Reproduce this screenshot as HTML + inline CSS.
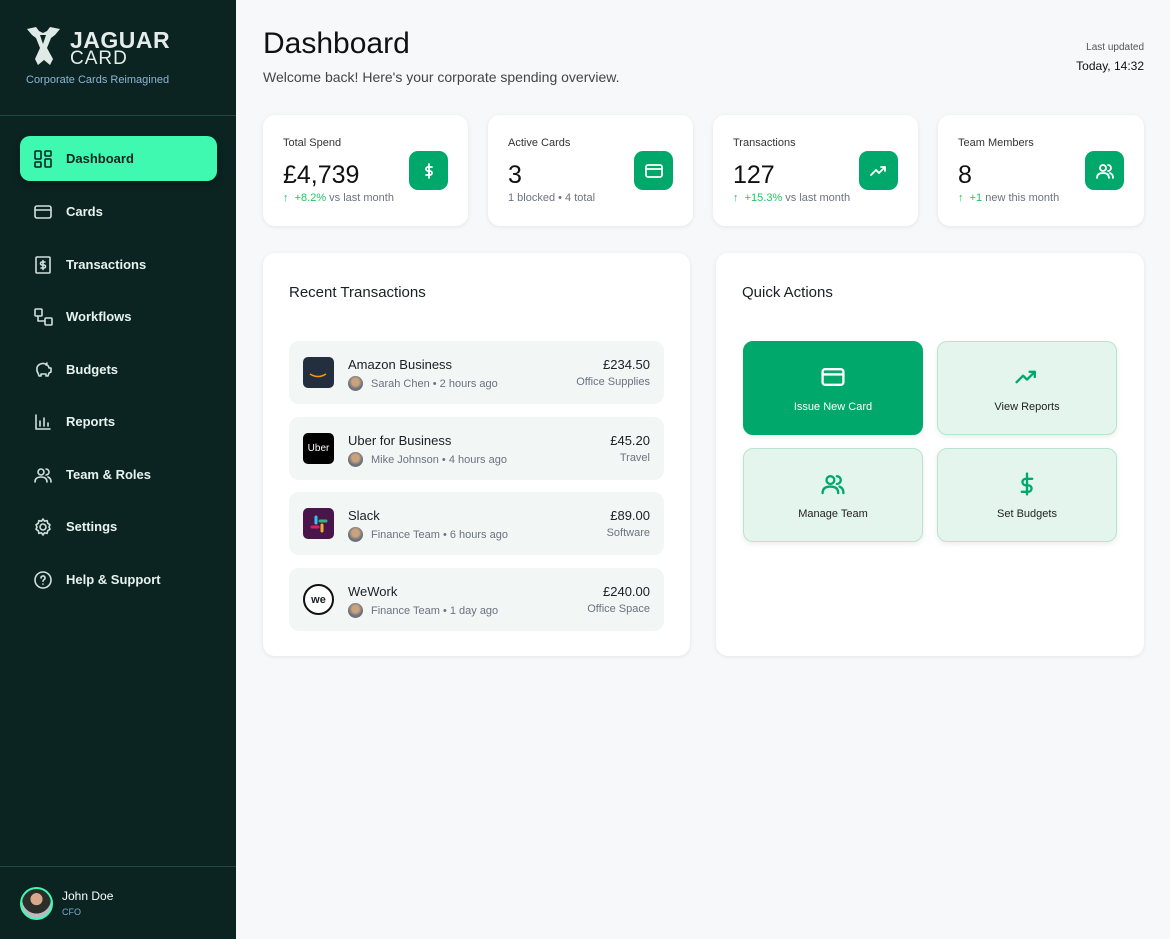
<!DOCTYPE html>
<html><head><meta charset="utf-8"><style>
*{box-sizing:border-box;margin:0;padding:0}
body{width:1170px;height:939px;font-family:"Liberation Sans",sans-serif;background:#f7f8f9;position:relative;overflow:hidden;color:#1a1f24}
.sb{position:absolute;left:0;top:0;width:236px;height:939px;background:#0b2421}
.logo{position:absolute;left:26px;top:26px}
.tag{position:absolute;left:26px;top:74px;font-size:11px;color:#8fb3d6}
.hr{position:absolute;left:0;width:236px;height:1px;background:#1d4a3f}
.nav{position:absolute;left:20px;width:197px;height:45px;display:flex;align-items:center;padding-left:13px;color:#e8f2ef;font-size:13px;font-weight:bold;border-radius:10px}
.nav svg{width:20px;height:20px;margin-right:13px;fill:none;stroke:#cfe0dc;stroke-width:1.6;stroke-linecap:round;stroke-linejoin:round}
.nav.act{background:#40f9b0;color:#0b2421;box-shadow:0 3px 8px rgba(0,0,0,.3)}
.nav.act svg{stroke:#0b2421}
.card{position:absolute;background:#fff;border-radius:12px;box-shadow:0 1px 4px rgba(0,0,0,.08)}
.st .l{position:absolute;left:20px;top:22px;font-size:11px;color:#333}
.st .v{position:absolute;left:20px;top:46px;font-size:25px;color:#111}
.st .s{position:absolute;left:20px;top:77px;font-size:11px;color:#6b7280}
.st .s b{color:#22c55e;font-weight:normal}
.st .ic{position:absolute;right:20px;top:36px;width:39px;height:39px;background:#00a86b;border-radius:9px;display:flex;align-items:center;justify-content:center}
.ic svg,.qa svg{fill:none;stroke:#fff;stroke-width:1.8;stroke-linecap:round;stroke-linejoin:round}
.tx{position:absolute;left:26px;width:375px;height:63px;background:#f2f6f5;border-radius:10px}
.tx .lg{position:absolute;left:14px;top:16px;width:31px;height:31px;border-radius:5px}
.tx .n{position:absolute;left:59px;top:16px;font-size:13px}
.tx .m{position:absolute;left:59px;top:35px;font-size:11px;color:#6b7280;display:flex;align-items:center}
.av{width:15px;height:15px;border-radius:50%;background:radial-gradient(circle at 50% 40%,#c9a37e 30%,#6b6f7a 60%);margin-right:8px}
.tx .a{position:absolute;right:14px;top:16px;font-size:13px}
.tx .c{position:absolute;right:14px;top:35px;font-size:11px;color:#6b7280}
.qa{position:absolute;width:180px;height:94px;border-radius:10px;background:#e4f5ee;border:1px solid #b7e6d0;box-shadow:0 2px 6px rgba(0,0,0,.08);font-size:11px;text-align:center;color:#222}
.qa svg{display:block;margin:22px auto 11px;stroke:#00a86b}
.qa.g{background:#00a86b;border-color:#00a86b;color:#fff}
.qa.g svg{stroke:#fff}
</style></head><body>
<div class="sb">
 <div class="logo">
  <svg width="36" height="40" viewBox="0 0 36 40"><path d="M1 3 L10 1 L13 5 L17 7 L21 5 L24 1 L34 3 L29 9 L25 12 L21 22 L27 33 L24 39 L18 34 L12 39 L9 33 L14 22 L10 12 L6 9 Z" fill="#dfe9e6"/><path d="M14 9 L17 18 L20 9 Z" fill="#0b2421"/></svg>
  <div style="position:absolute;left:44px;top:1px;font-size:23px;font-weight:bold;color:#e5ecea;letter-spacing:0.5px;line-height:26px">JAGUAR</div>
  <div style="position:absolute;left:44px;top:22px;font-size:19px;color:#e5ecea;letter-spacing:1px;line-height:22px">CARD</div>
 </div>
 <div class="tag">Corporate Cards Reimagined</div>
 <div class="hr" style="top:115px"></div>
 <div class="nav act" style="top:136px"><svg viewBox="0 0 20 20"><rect x="2" y="2" width="6" height="8" rx="1"/><rect x="12" y="2" width="6" height="5" rx="1"/><rect x="2" y="13" width="6" height="5" rx="1"/><rect x="12" y="10" width="6" height="8" rx="1"/></svg>Dashboard</div>
 <div class="nav" style="top:189px"><svg viewBox="0 0 20 20"><rect x="2" y="4" width="16" height="12" rx="2"/><path d="M2 8h16"/></svg>Cards</div>
 <div class="nav" style="top:242px"><svg viewBox="0 0 20 20"><rect x="3" y="2" width="14" height="16" rx="1"/><path d="M12 7h-3a1.5 1.5 0 0 0 0 3h2a1.5 1.5 0 0 1 0 3h-3M10 5.5v9"/></svg>Transactions</div>
 <div class="nav" style="top:294px"><svg viewBox="0 0 20 20"><rect x="2" y="2" width="7" height="7" rx="1"/><rect x="12" y="11" width="7" height="7" rx="1"/><path d="M5 9v5h7"/></svg>Workflows</div>
 <div class="nav" style="top:347px"><svg viewBox="0 0 20 20"><path d="M4 9a6 5 0 0 1 12-1h2v4l-2 1-1 3h-2v-2H8v2H6l-1-3a5 5 0 0 1-1-4zM13 5l1-2"/></svg>Budgets</div>
 <div class="nav" style="top:399px"><svg viewBox="0 0 20 20"><path d="M3 3v14h14M7 14V9M11 14V6M15 14v-3"/></svg>Reports</div>
 <div class="nav" style="top:452px"><svg viewBox="0 0 20 20"><circle cx="8" cy="7" r="3"/><path d="M2 17c0-4 3-5 6-5s6 1 6 5M13 4a3 3 0 0 1 0 6M15 12c2 1 3 2 3 5"/></svg>Team &amp; Roles</div>
 <div class="nav" style="top:504px"><svg viewBox="0 0 20 20"><circle cx="10" cy="10" r="3"/><path d="M10 2l1.5 2.2 2.6-.6.6 2.6L17 7.8 16 10l1 2.2-2.3 1.6-.6 2.6-2.6-.6L10 18l-1.5-2.2-2.6.6-.6-2.6L3 12.2 4 10 3 7.8l2.3-1.6.6-2.6 2.6.6z"/></svg>Settings</div>
 <div class="nav" style="top:557px"><svg viewBox="0 0 20 20"><circle cx="10" cy="10" r="8"/><path d="M8 8a2 2 0 1 1 3 1.7c-.7.4-1 .8-1 1.5M10 14v.1"/></svg>Help &amp; Support</div>
 <div class="hr" style="top:866px"></div>
 <div style="position:absolute;left:20px;top:887px;width:33px;height:33px;border-radius:50%;border:2px solid #40f9b0;background:radial-gradient(circle at 50% 35%,#d7a88a 25%,#2b2f2c 26%,#2b2f2c 60%,#b8bcc0 61%)"></div>
 <div style="position:absolute;left:62px;top:889px;font-size:12px;color:#fff">John Doe</div>
 <div style="position:absolute;left:62px;top:907px;font-size:9px;color:#7ea6d6">CFO</div>
</div>

<div style="position:absolute;left:263px;top:27px;font-size:30px;color:#111">Dashboard</div>
<div style="position:absolute;left:263px;top:69px;font-size:14px;color:#444">Welcome back! Here's your corporate spending overview.</div>
<div style="position:absolute;right:26px;top:42px;font-size:10px;color:#555;text-align:right">Last updated</div>
<div style="position:absolute;right:26px;top:59px;font-size:12px;color:#111">Today, 14:32</div>

<div class="card st" style="left:263px;top:115px;width:205px;height:111px"><div class="l">Total Spend</div><div class="v">£4,739</div><div class="s"><b>↑ &nbsp;+8.2%</b> vs last month</div><div class="ic"><svg width="20" height="20" viewBox="0 0 20 20"><path d="M13 6h-4a2 2 0 0 0 0 4h2a2 2 0 0 1 0 4H7M10 3v14"/></svg></div></div>
<div class="card st" style="left:488px;top:115px;width:205px;height:111px"><div class="l">Active Cards</div><div class="v">3</div><div class="s">1 blocked • 4 total</div><div class="ic"><svg width="20" height="20" viewBox="0 0 20 20"><rect x="2" y="4" width="16" height="12" rx="2"/><path d="M2 8h16"/></svg></div></div>
<div class="card st" style="left:713px;top:115px;width:205px;height:111px"><div class="l">Transactions</div><div class="v">127</div><div class="s"><b>↑ &nbsp;+15.3%</b> vs last month</div><div class="ic"><svg width="20" height="20" viewBox="0 0 20 20"><path d="M2 14l5-5 3 3 6-6M12 6h4v4"/></svg></div></div>
<div class="card st" style="left:938px;top:115px;width:206px;height:111px"><div class="l">Team Members</div><div class="v">8</div><div class="s"><b>↑ &nbsp;+1</b> new this month</div><div class="ic"><svg width="20" height="20" viewBox="0 0 20 20"><circle cx="8" cy="7" r="3"/><path d="M2 17c0-4 3-5 6-5s6 1 6 5M13 4a3 3 0 0 1 0 6M15 12c2 1 3 2 3 5"/></svg></div></div>

<div class="card" style="left:263px;top:253px;width:427px;height:403px">
 <div style="position:absolute;left:26px;top:31px;font-size:15px">Recent Transactions</div>
 <div class="tx" style="top:88px"><div class="lg" style="background:#232f3e"><svg width="31" height="31"><path d="M7 17q8 5 16 0" stroke="#f90" stroke-width="1.6" fill="none"/></svg></div><div class="n">Amazon Business</div><div class="m"><span class="av"></span>Sarah Chen • 2 hours ago</div><div class="a">£234.50</div><div class="c">Office Supplies</div></div>
 <div class="tx" style="top:164px"><div class="lg" style="background:#000;color:#fff;font-size:10px;display:flex;align-items:center;justify-content:center">Uber</div><div class="n">Uber for Business</div><div class="m"><span class="av"></span>Mike Johnson • 4 hours ago</div><div class="a">£45.20</div><div class="c">Travel</div></div>
 <div class="tx" style="top:239px"><div class="lg" style="background:#4a154b;display:flex;align-items:center;justify-content:center"><svg width="18" height="18" viewBox="0 0 18 18" stroke-width="3" stroke-linecap="round"><path d="M6 2v6" stroke="#36c5f0"/><path d="M2 12h6" stroke="#e01e5a"/><path d="M12 10v6" stroke="#ecb22e"/><path d="M10 6h6" stroke="#2eb67d"/></svg></div><div class="n">Slack</div><div class="m"><span class="av"></span>Finance Team • 6 hours ago</div><div class="a">£89.00</div><div class="c">Software</div></div>
 <div class="tx" style="top:315px"><div class="lg" style="background:#fff;border:2px solid #111;border-radius:50%;font-size:11px;font-weight:bold;display:flex;align-items:center;justify-content:center">we</div><div class="n">WeWork</div><div class="m"><span class="av"></span>Finance Team • 1 day ago</div><div class="a">£240.00</div><div class="c">Office Space</div></div>
</div>

<div class="card" style="left:716px;top:253px;width:428px;height:403px">
 <div style="position:absolute;left:26px;top:31px;font-size:15px">Quick Actions</div>
 <div class="qa g" style="left:27px;top:88px"><svg width="26" height="26" viewBox="0 0 20 20"><rect x="2" y="4" width="16" height="12" rx="2"/><path d="M2 8h16"/></svg>Issue New Card</div>
 <div class="qa" style="left:221px;top:88px"><svg width="26" height="26" viewBox="0 0 20 20"><path d="M2 14l5-5 3 3 6-6M12 6h4v4"/></svg>View Reports</div>
 <div class="qa" style="left:27px;top:195px"><svg width="26" height="26" viewBox="0 0 20 20"><circle cx="8" cy="7" r="3"/><path d="M2 17c0-4 3-5 6-5s6 1 6 5M13 4a3 3 0 0 1 0 6M15 12c2 1 3 2 3 5"/></svg>Manage Team</div>
 <div class="qa" style="left:221px;top:195px"><svg width="26" height="26" viewBox="0 0 20 20"><path d="M14 6h-5a2.5 2.5 0 0 0 0 5h2a2.5 2.5 0 0 1 0 5H6M10 2v16"/></svg>Set Budgets</div>
</div>
</body></html>
